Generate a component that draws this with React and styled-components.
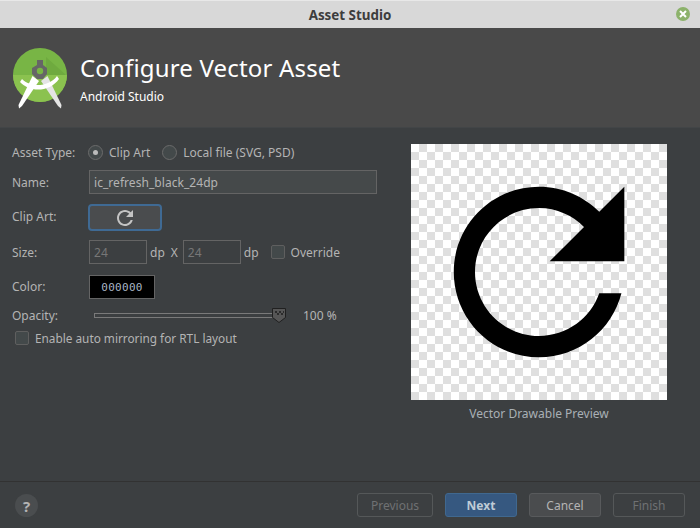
import React from 'react'
import styled, { createGlobalStyle } from 'styled-components'

const Global = createGlobalStyle`
  html, body { margin: 0; padding: 0; background: #3c3f41; }
  * { box-sizing: border-box; }
`

const Window = styled.div`
  width: 700px;
  height: 528px;
  display: flex;
  flex-direction: column;
  background: #3c3f41;
  color: #b4b4b4;
  font-family: "Noto Sans", sans-serif;
  font-size: 12px;
  overflow: hidden;
`

const TitleBar = styled.div`
  height: 28px;
  flex: none;
  display: flex;
  align-items: center;
  justify-content: center;
  position: relative;
  background: #d8d8d8;
  border-top: 1px solid #e8e8e8;
  color: #3d3d3d;
  font-weight: 700;
  font-size: 13.4px;
`

const CloseDot = styled.div`
  position: absolute;
  right: 10px;
  top: 6px;
  width: 14px;
  height: 14px;
  border-radius: 50%;
  background: #8cb26b;
  display: flex;
  align-items: center;
  justify-content: center;
`

const Header = styled.div`
  height: 100px;
  flex: none;
  display: flex;
  align-items: center;
  gap: 11px;
  padding: 0 0 0 13px;
  background: #494949;
  border-bottom: 1px solid #424547;
`

const LogoMark = styled.svg`
  flex: none;
  margin-top: 5px;
`

const HeaderText = styled.div`
  display: flex;
  flex-direction: column;
  color: #ffffff;
`

const Heading = styled.div`
  font-size: 24px;
  line-height: 33px;
  letter-spacing: 0.17px;
`

const SubHeading = styled.div`
  font-size: 12px;
  line-height: 16px;
  margin-top: 5px;
`

const Body = styled.div`
  flex: 1;
  display: flex;
  justify-content: space-between;
  padding: 16px 33px 0 12px;
  min-height: 0;
`

const Form = styled.div`
  width: 365px;
  display: flex;
  flex-direction: column;
`

const Row = styled.div`
  display: flex;
  align-items: center;
  height: ${p => p.$h}px;
  margin-bottom: ${p => p.$mb || 0}px;
`

const Label = styled.div`
  width: 77px;
  flex: none;
  padding-bottom: ${p => (p.$lift ? 2 : 0)}px;
`

const Radio = styled.span`
  width: 15px;
  height: 15px;
  border-radius: 50%;
  border: 1px solid #6b6b6b;
  background: #43494a;
  display: flex;
  align-items: center;
  justify-content: center;
  margin-right: 6px;
  &::after {
    content: '';
    display: ${p => (p.$on ? 'block' : 'none')};
    width: 5px;
    height: 5px;
    border-radius: 50%;
    background: #bbbbbb;
  }
`

const Option = styled.div`
  display: flex;
  align-items: center;
  margin-left: ${p => p.$ml}px;
`

const TextField = styled.div`
  height: 24px;
  width: ${p => p.$w}px;
  margin-left: ${p => p.$ml || 0}px;
  flex: none;
  display: flex;
  align-items: center;
  padding: 0 4px;
  background: ${p => (p.$disabled ? 'transparent' : '#45494a')};
  border: 1px solid #646464;
  color: ${p => (p.$disabled ? '#777777' : '#b4b4b4')};
  letter-spacing: 0.05px;
`

const IconButton = styled.div`
  width: 74px;
  height: 27px;
  margin-left: -1px;
  display: flex;
  align-items: center;
  justify-content: center;
  background: #4a4c4e;
  border: 2px solid #3f6a94;
  border-radius: 4px;
`

const Unit = styled.span`
  margin-left: ${p => p.$ml}px;
`

const MirrorLabel = styled.span`
  margin-left: 6px;
  font-size: 11.8px;
`

const CheckBox = styled.span`
  width: 14px;
  height: 14px;
  flex: none;
  margin-left: ${p => p.$ml}px;
  border: 1px solid #5f5f5f;
  border-radius: 2px;
  background: #43494a;
`

const Swatch = styled.div`
  width: 66px;
  height: 24px;
  display: flex;
  align-items: center;
  justify-content: center;
  background: #000000;
  border: 1px solid #646464;
  color: #a9b7c6;
  font-family: "DejaVu Sans Mono", monospace;
  font-size: 11px;
  letter-spacing: 0.3px;
`

const Slider = styled.div`
  position: relative;
  width: 180px;
  height: 5px;
  margin-left: 5px;
  background: #3c3f41;
  border: 1px solid #7a7a7a;
`

const Thumb = styled.svg`
  position: absolute;
  left: ${p => p.$left}px;
  top: -6px;
`

const PreviewColumn = styled.div`
  display: flex;
  flex-direction: column;
  align-items: center;
`

const Checker = styled.div`
  width: 256px;
  height: 256px;
  background-color: #ffffff;
  background-image: conic-gradient(#dfdfdf 25%, #ffffff 0 50%, #dfdfdf 0 75%, #ffffff 0);
  background-size: 16px 16px;
`

const Caption = styled.div`
  margin-top: 6px;
  line-height: 16px;
  color: #a9b0b5;
`

const Footer = styled.div`
  height: 47px;
  flex: none;
  display: flex;
  align-items: flex-start;
  padding: 11px 15px 0 15px;
  border-top: 1px solid #323232;
`

const Help = styled.div`
  width: 23px;
  height: 23px;
  margin-top: 1px;
  margin-right: auto;
  border-radius: 50%;
  background: #4a4d4f;
  display: flex;
  align-items: center;
  justify-content: center;
  color: #b4b4b4;
  font-size: 15px;
  font-weight: 700;
`

const Button = styled.div`
  width: ${p => p.$w}px;
  height: 24px;
  margin-left: 12px;
  display: flex;
  align-items: center;
  justify-content: center;
  border-radius: 3px;
  border: 1px solid ${p => (p.$primary ? '#40688f' : p.$disabled ? '#555859' : '#585a5c')};
  background: ${p => (p.$primary ? '#365880' : p.$disabled ? 'transparent' : '#4a4c4e')};
  color: ${p => (p.$primary ? '#bfcbd6' : p.$disabled ? '#6f7173' : '#b4b4b4')};
  font-weight: ${p => (p.$primary ? 700 : 400)};
`

const refreshPath =
  'M17.65 6.35C16.2 4.9 14.21 4 12 4c-4.42 0-7.99 3.58-7.99 8s3.57 8 7.99 8c3.73 0 6.84-2.55 7.73-6h-2.08c-.82 2.33-3.04 4-5.65 4-3.31 0-6-2.69-6-6s2.69-6 6-6c1.66 0 3.14.69 4.22 1.78L13 11h7V4l-2.35 2.35z'

const RefreshIcon = ({ size, color }) => (
  <svg width={size} height={size} viewBox="0 0 24 24" fill={color}>
    <path d={refreshPath} />
  </svg>
)

const Logo = () => (
  <LogoMark width="56" height="64" viewBox="0 0 56 64">
    <circle cx="27" cy="27" r="27" fill="#78b545" />
    <path d="M0 27h54a27 27 0 0 1-54 0z" fill="#8bc24f" />
    <path d="M33 9l19.500 17.500-.5.500H33z" fill="#6faa3f" />
    <path d="M19.500 28 L5.500 57 L6 60.500 L9 58 L26 33z" fill="#ffffff" />
    <path d="M34.500 28 L48.500 57 L48 60.500 L45 58 L28 33z" fill="#e4e4e4" />
    <path d="M9 31c9 9 27 8 35-3l2 3c-9 13-29 14-39 3z" fill="#ffffff" />
    <path d="M24 12h6v5l4 3v6l-4 5h-6l-5-5v-6l5-3z" fill="#666666" />
    <circle cx="27" cy="23" r="3.200" fill="#78b545" />
  </LogoMark>
)

export default function App() {
  return (
    <Window>
      <Global />
      <TitleBar>
        Asset Studio
        <CloseDot>
          <svg width="8" height="8" viewBox="0 0 8 8" stroke="#ffffff" strokeWidth="2">
            <path d="M1 1l6 6M7 1l-6 6" />
          </svg>
        </CloseDot>
      </TitleBar>
      <Header>
        <Logo />
        <HeaderText>
          <Heading>Configure Vector Asset</Heading>
          <SubHeading>Android Studio</SubHeading>
        </HeaderText>
      </Header>
      <Body>
        <Form>
          <Row $h={16} $mb={10}>
            <Label>Asset Type:</Label>
            <Option $ml={-1}><Radio $on />Clip Art</Option>
            <Option $ml={12}><Radio />Local file (SVG, PSD)</Option>
          </Row>
          <Row $h={24} $mb={10}>
            <Label>Name:</Label>
            <TextField $w={288}>ic_refresh_black_24dp</TextField>
          </Row>
          <Row $h={27} $mb={9}>
            <Label $lift>Clip Art:</Label>
            <IconButton><RefreshIcon size={24} color="#c4c4c4" /></IconButton>
          </Row>
          <Row $h={24} $mb={11}>
            <Label>Size:</Label>
            <TextField $w={58} $disabled>24</TextField>
            <Unit $ml={3}>dp</Unit>
            <Unit $ml={6}>X</Unit>
            <TextField $w={58} $ml={5} $disabled>24</TextField>
            <Unit $ml={3}>dp</Unit>
            <CheckBox $ml={12} />
            <Unit $ml={6}>Override</Unit>
          </Row>
          <Row $h={24} $mb={4}>
            <Label $lift>Color:</Label>
            <Swatch>000000</Swatch>
          </Row>
          <Row $h={24}>
            <Label>Opacity:</Label>
            <Slider>
              <Thumb $left={177} width="14" height="15" viewBox="0 0 14 15">
                <path d="M.5.5h13v9l-6.500 5-6.500-5z" fill="#565656" stroke="#202020" />
                <path d="M3 3h2v2H3zM7 3h2v2H7zM5 5h2v2H5zM9 5h2v2H9zM11 3h1v2h-1z" fill="#2b2b2b" />
              </Thumb>
            </Slider>
            <Unit $ml={29}>100 %</Unit>
          </Row>
          <Row $h={22}>
            <CheckBox $ml={3} />
            <MirrorLabel>Enable auto mirroring for RTL layout</MirrorLabel>
          </Row>
        </Form>
        <PreviewColumn>
          <Checker><RefreshIcon size={256} color="#000000" /></Checker>
          <Caption>Vector Drawable Preview</Caption>
        </PreviewColumn>
      </Body>
      <Footer>
        <Help>?</Help>
        <Button $w={76} $disabled>Previous</Button>
        <Button $w={72} $primary>Next</Button>
        <Button $w={72}>Cancel</Button>
        <Button $w={72} $disabled>Finish</Button>
      </Footer>
    </Window>
  )
}
